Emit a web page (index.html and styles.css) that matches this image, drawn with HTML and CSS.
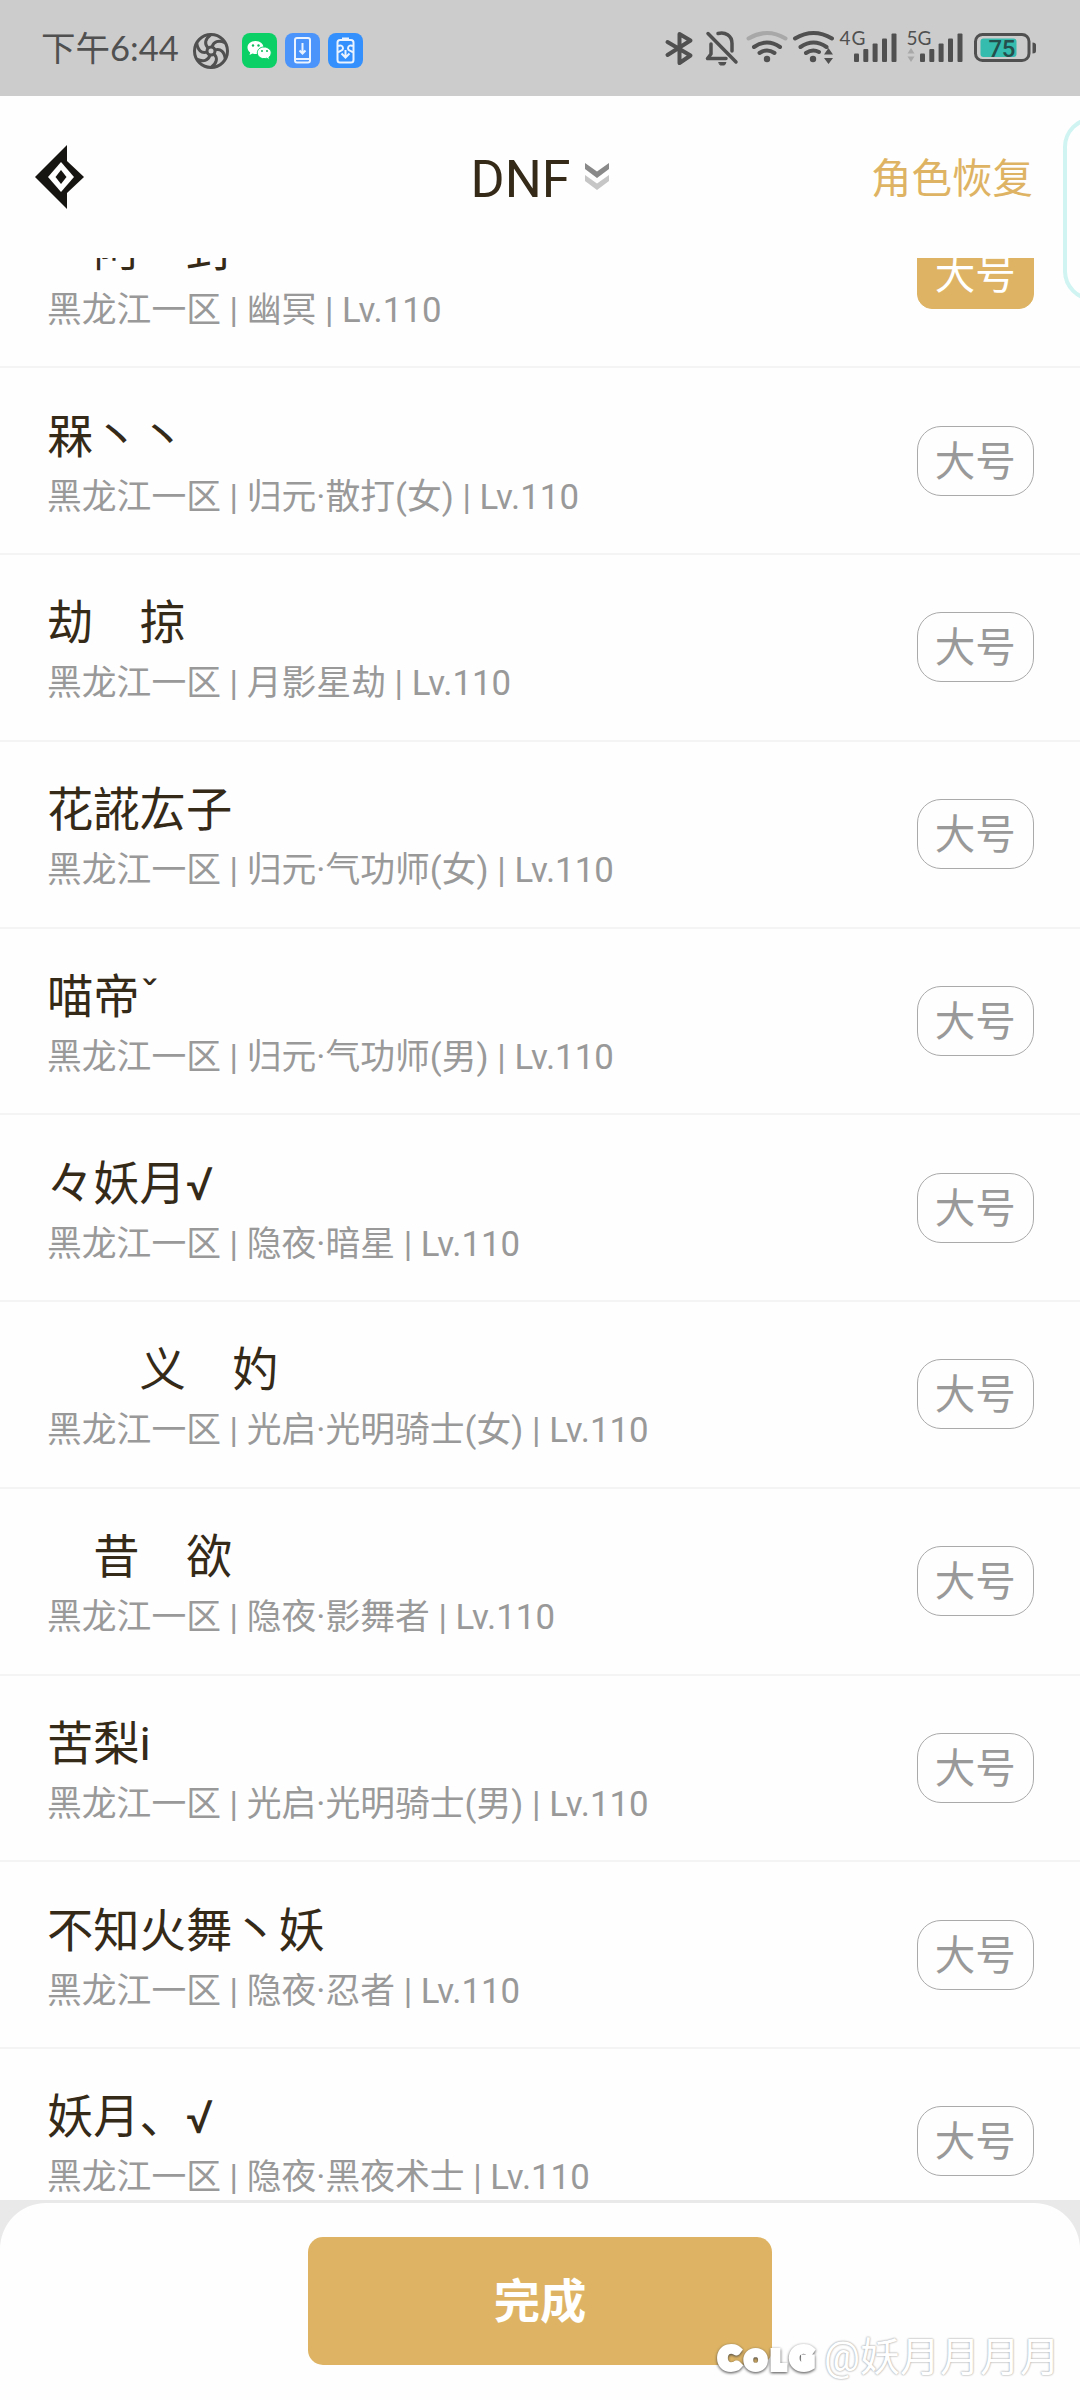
FILE: index.html
```html
<!DOCTYPE html>
<html lang="zh-CN">
<head>
<meta charset="utf-8">
<title>DNF</title>
<link rel="stylesheet" href="styles.css">
</head>
<body>
<div class="screen">
  <div class="status">
    <div class="status-left">
      <span class="clock">下午6:44</span>
      <svg class="i-shutter" width="38" height="38" viewBox="0 0 38 38" fill="none" stroke="#505050" stroke-width="3">
        <circle cx="19" cy="19" r="16.5"/><circle cx="19" cy="19" r="4"/>
        <path d="M16 16C12 12 13 7 19 2.500"/>
        <path d="M16 16C12 12 13 7 19 2.500" transform="rotate(60 19 19)"/>
        <path d="M16 16C12 12 13 7 19 2.500" transform="rotate(120 19 19)"/>
        <path d="M16 16C12 12 13 7 19 2.500" transform="rotate(180 19 19)"/>
        <path d="M16 16C12 12 13 7 19 2.500" transform="rotate(240 19 19)"/>
        <path d="M16 16C12 12 13 7 19 2.500" transform="rotate(300 19 19)"/>
      </svg>
      <svg class="i-chat" width="35" height="35" viewBox="0 0 35 35">
        <rect width="35" height="35" rx="8" fill="#0bd066"/>
        <path d="M13.500 8C8.500 8 5.500 11 5.500 14.500c0 2.200 1 3.800 2.700 5L7.500 22l3-1.500c3.500 1 5.500.5 7-.5 3-1.500 4-3.500 4-5.500C21.500 11 18.500 8 13.500 8z" fill="#fff"/>
        <path d="M22 14c-4 0-6.700 2.700-6.700 5.800 0 3.200 2.700 5.800 6.700 5.800 1 0 2-.2 2.800-.4L27.500 27l-.6-2.700c1.400-1 2.300-2.600 2.300-4.500C29.200 16.700 26 14 22 14z" fill="#fff" stroke="#0bd066"/>
        <g fill="#0bbd5d"><circle cx="11" cy="12.500" r="1.200"/><circle cx="16.500" cy="12.500" r="1.200"/><circle cx="20" cy="18" r="1"/><circle cx="25" cy="18" r="1"/></g>
      </svg>
      <svg class="i-app" width="35" height="35" viewBox="0 0 35 35" fill="none" stroke="#eaf3ff" stroke-width="2">
        <rect width="35" height="35" rx="8" fill="#4b94fb" stroke="none"/>
        <rect x="10" y="5" width="15" height="24.500" rx="2"/><path d="M10 26h15M17.500 10v10M14.500 17.500l3 3 3-3"/>
      </svg>
      <svg class="i-app" width="35" height="35" viewBox="0 0 35 35" fill="none" stroke="#eaf3ff" stroke-width="2">
        <rect width="35" height="35" rx="8" fill="#3390fc" stroke="none"/>
        <rect x="9.500" y="7" width="16" height="22.500" rx="2.500"/><path d="M14 5.500h7M10 13c3-1.500 5 0 5 2.500s-3 2-5 4M25 13c-3-1.500-5 0-5 2.500s3 2 5 4M17.500 17v7M13.500 20.500l4 4 4-4"/>
      </svg>
    </div>
    <div class="status-right">
      <svg width="400" height="44" viewBox="660 26 400 44" fill="none" stroke="#505050" stroke-width="4" stroke-linecap="round" stroke-linejoin="round">
        <path d="M667.500 42l23 13.500-11 7.500V34l11 6.500-23 14.500"/>
        <g stroke-width="3.500"><path d="M708 33.500l28 28.500M711 44v10l-3.500 4.500H726M718 33.500c7-2 14 2 14 10V51"/></g>
        <path d="M719 62.500h7l-1.500 2.500h-4z" fill="#505050" stroke-width="1"/>
        <path d="M748.500 38.500q18.500-11 37 0" stroke="#a8a8a8"/>
        <path d="M754 47q13-9 26 0M759.500 53q7.500-5 15 0"/>
        <circle cx="767" cy="59" r="3.200" fill="#505050" stroke="none"/>
        <path d="M795 38.500q18.500-11 37 0M800.500 47q13-9 26 0M806 53q6.500-4.500 13-1"/>
        <circle cx="813" cy="59" r="3.200" fill="#505050" stroke="none"/>
        <g fill="#505050" stroke="none"><path d="M828.500 48l4.500 6.500h-9zM828.500 64l4.500-6h-9z"/>
          <rect x="854" y="53.500" width="5" height="8.500" rx="1"/><rect x="863.300" y="49" width="5" height="13" rx="1"/><rect x="872.600" y="43.500" width="5" height="18.500" rx="1"/><rect x="882" y="38.500" width="5" height="23.500" rx="1"/><rect x="891.500" y="33.500" width="5" height="28.500" rx="1"/>
          <rect x="920" y="53.500" width="5" height="8.500" rx="1"/><rect x="929.300" y="49" width="5" height="13" rx="1"/><rect x="938.600" y="43.500" width="5" height="18.500" rx="1"/><rect x="948" y="38.500" width="5" height="23.500" rx="1"/><rect x="957.500" y="33.500" width="5" height="28.500" rx="1"/>
          <path d="M1032.500 42.500q3.500 0 3.500 2.500v6q0 2.500-3.500 2.500z"/></g>
        <path d="M911 48l3.500 5.500h-7zM911 62l3.500-5.500h-7z" fill="#a8a8a8" stroke="none"/>
        <rect x="975.500" y="34.500" width="53.500" height="26" rx="7" stroke-width="3"/>
        <rect x="980.500" y="38.500" width="36" height="18.500" rx="3" fill="#35bcae" stroke="none"/>
        <g class="sig" stroke="none"><text x="839.500" y="45" textLength="26">4G</text><text x="906.500" y="45" textLength="25">5G</text></g>
        <text class="pct" x="988.500" y="56.500" textLength="27" stroke="none">75</text>
      </svg>
    </div>
  </div>

  <header class="header">
    <svg class="logo" width="50" height="64" viewBox="0 0 50 64"><path d="M32 0v16L49 32 32 48v16L0 32z" fill="#171511"/><path d="M26 17L39 32 26 47 13 32z" fill="#fff"/><path d="M26 25l5.500 7-5.500 7-5.500-7z" fill="#171511"/></svg>
    <div class="heading">
      <span class="game">DNF</span>
      <svg width="24" height="28" viewBox="0 0 24 28"><path d="M0 0l12 8.500L24 0v6L12 15 0 6z" fill="#898989"/><path d="M0 12l12 8.500L24 12v6L12 27 0 18z" fill="#c6c6c6"/></svg>
    </div>
    <span class="recover">角色恢复</span>
  </header>

  <main class="list">
    <div class="row"><div class="info"><div class="name">　阿　封</div><div class="meta">黑龙江一区 | 幽冥 | Lv.110</div></div><span class="tag on">大号</span></div>
    <div class="row"><div class="info"><div class="name">槑丶丶</div><div class="meta">黑龙江一区 | 归元·散打(女) | Lv.110</div></div><span class="tag">大号</span></div>
    <div class="row"><div class="info"><div class="name">劫　掠</div><div class="meta">黑龙江一区 | 月影星劫 | Lv.110</div></div><span class="tag">大号</span></div>
    <div class="row"><div class="info"><div class="name">花誮厷子</div><div class="meta">黑龙江一区 | 归元·气功师(女) | Lv.110</div></div><span class="tag">大号</span></div>
    <div class="row"><div class="info"><div class="name">喵帝ˇ</div><div class="meta">黑龙江一区 | 归元·气功师(男) | Lv.110</div></div><span class="tag">大号</span></div>
    <div class="row"><div class="info"><div class="name">々妖月√</div><div class="meta">黑龙江一区 | 隐夜·暗星 | Lv.110</div></div><span class="tag">大号</span></div>
    <div class="row"><div class="info"><div class="name">　　义　妁</div><div class="meta">黑龙江一区 | 光启·光明骑士(女) | Lv.110</div></div><span class="tag">大号</span></div>
    <div class="row"><div class="info"><div class="name">　昔　欲</div><div class="meta">黑龙江一区 | 隐夜·影舞者 | Lv.110</div></div><span class="tag">大号</span></div>
    <div class="row"><div class="info"><div class="name">苦梨i</div><div class="meta">黑龙江一区 | 光启·光明骑士(男) | Lv.110</div></div><span class="tag">大号</span></div>
    <div class="row"><div class="info"><div class="name">不知火舞丶妖</div><div class="meta">黑龙江一区 | 隐夜·忍者 | Lv.110</div></div><span class="tag">大号</span></div>
    <div class="row"><div class="info"><div class="name">妖月、√</div><div class="meta">黑龙江一区 | 隐夜·黑夜术士 | Lv.110</div></div><span class="tag">大号</span></div>
  </main>

  <footer class="footer"><div class="sheet"><div class="done">完成</div></div></footer>

  <div class="side-panel"></div>
  <div class="watermark"><span class="brand"><b class="big">C</b><b class="o">O</b><b>L</b><b class="big">G</b></span><span class="user">@妖月月月月</span></div>
</div>
</body>
</html>
```
FILE: styles.css
```css
* { box-sizing: border-box; }
body { margin: 0; background: #fefefe; font-family: Roboto, "Noto Sans CJK SC", sans-serif; }
.screen { position: relative; width: 1080px; height: 2400px; overflow: hidden; display: flex; flex-direction: column; background: #fefefe; }

.status { height: 96px; flex: none; background: #ccc; display: flex; justify-content: space-between; padding: 26px 20px 0 41px; }
.status-left { display: flex; height: 49px; align-items: center; }
.clock { font-family: Lato, "Noto Sans CJK SC", sans-serif; font-size: 34.500px; line-height: 50px; color: #505050; width: 151px; white-space: nowrap; padding-bottom: 5px; }
.i-chat { margin-left: 12px; }
.i-app { margin-left: 8px; }
.sig { font: 19px Lato, sans-serif; fill: #505050; }
.pct { font: 500 24px Roboto, sans-serif; fill: #244f4c; }

.header { height: 162px; flex: none; display: grid; grid-template-columns: 1fr auto 1fr; align-items: center; padding: 0 47px 0 35px; }
.heading { display: flex; align-items: center; gap: 15px; margin-left: 12px; }
.game { font-size: 52px; line-height: 60px; color: #352a18; padding-top: 6px; }
.recover { justify-self: end; font-size: 40.500px; color: #deb464; white-space: nowrap; padding-bottom: 4px; }

.list { height: 1942px; flex: none; overflow: hidden; display: flex; flex-direction: column; justify-content: flex-start; }
.row { height: 186.750px; flex: none; border-bottom: 2px solid #f4f4f4; display: flex; justify-content: space-between; align-items: center; padding: 0 46.500px 0 47px; }
.row:first-child { margin-top: -76.500px; }
.info { display: flex; flex-direction: column; white-space: pre; padding-top: 8px; }
.name { font-size: 46.300px; line-height: 65px; color: #352a18; }
.meta { font-size: 34.800px; line-height: 55px; color: #999; }
.tag { width: 116.500px; height: 70px; border: 1.500px solid #aaa; border-radius: 24px; font-size: 40.500px; line-height: 70px; color: #999; text-align: center; }
.tag.on { background: #deb464; border-color: #deb464; border-radius: 15px; color: #fff; }

.footer { flex: 1; background: #e9e9e9; padding-top: 2.500px; }
.sheet { height: 100%; background: #fefefe; border-radius: 46px 46px 0 0; padding-top: 34.500px; display: flex; justify-content: center; align-items: flex-start; }
.done { width: 464px; height: 128px; border-radius: 15px; background: #deb464; color: #fff; font-size: 46.300px; font-weight: 700; line-height: 130px; text-align: center; }

.side-panel { position: absolute; left: 1063px; top: 117px; width: 60px; height: 184px; border: 4px solid #cff4f2; border-radius: 32px; }
.watermark { position: absolute; left: 715px; top: 2328px; display: flex; align-items: center; height: 60px; }
.brand { display: flex; align-items: baseline; width: 109px; color: #fff; font: 900 25px/60px Lato, sans-serif; -webkit-text-stroke: 6px #fff; paint-order: stroke; filter: drop-shadow(0 1px 1.500px #444); padding-left: 4px; gap: 6px; }
.brand b { font-weight: 900; }
.brand .big { font-size: 31px; }
.user { font-size: 40px; line-height: 60px; color: #fff; text-shadow: 0 0 2px #aaa, 0 0 2px #bbb; white-space: nowrap; }
```
